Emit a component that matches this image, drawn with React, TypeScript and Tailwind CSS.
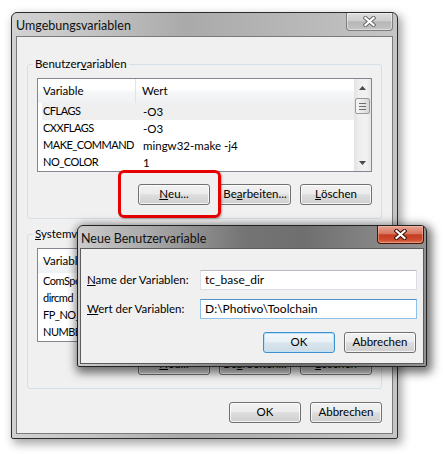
import type { ReactNode } from "react";
import clsx from "clsx";

const FONT = "font-[family-name:Lato,'Liberation_Sans',sans-serif]";

const userRows: [string, string][] = [
  ["CFLAGS", "-O3"],
  ["CXXFLAGS", "-O3"],
  ["MAKE_COMMAND", "mingw32-make -j4"],
  ["NO_COLOR", "1"],
];

const systemRows: [string, string][] = [
  ["ComSpec", "C:\\Windows\\system32\\cmd.exe"],
  ["dircmd", "/a"],
  ["FP_NO_HOST_CHECK", "NO"],
  ["NUMBER_OF_PROCESSORS", "4"],
];

function CloseGlyph({ outline }: { outline: string }) {
  return (
    <svg width="13" height="11" viewBox="0 0 13 11">
      <path d="M2.5 2 L10.5 9 M10.5 2 L2.5 9" stroke={outline} strokeWidth="4.2" strokeLinecap="square" />
      <path d="M2.5 2 L10.5 9 M10.5 2 L2.5 9" stroke="#ffffff" strokeWidth="2.2" strokeLinecap="square" />
    </svg>
  );
}

function CaptionClose({ active }: { active?: boolean }) {
  return (
    <div
      className={clsx(
        "flex h-[18px] w-[47px] items-center justify-center rounded-b-[4px] border border-t-0",
        active
          ? "border-[#4a1208] bg-[linear-gradient(#e6a594,#d8765f_45%,#c43d22_52%,#cc4a2e_80%,#de7650)] shadow-[inset_0_0_0_1px_rgba(255,200,180,0.45)]"
          : "border-[#7e7e7e] bg-[linear-gradient(#dedede,#cdcdcd_45%,#b7b7b7_52%,#c3c3c3)] shadow-[inset_0_0_0_1px_rgba(255,255,255,0.45)]"
      )}
    >
      <CloseGlyph outline={active ? "#3b0e06" : "#6a6a6a"} />
    </div>
  );
}

function WinButton({ children, primary = false }: { children: ReactNode; primary?: boolean }) {
  return (
    <div
      className={clsx(
        "flex h-[21px] w-[72px] shrink-0 items-center justify-center rounded-[3px] border pb-[1px] text-[11.5px] leading-none text-black",
        primary
          ? "border-[#3d90d0] bg-[linear-gradient(#f3f8fb,#e9f1f6_45%,#d9e5ee_52%,#cfdbe5)] shadow-[inset_0_0_0_1px_#bfe2f7]"
          : "border-[#707070] bg-[linear-gradient(#f2f2f2,#ebebeb_45%,#dddddd_52%,#cfcfcf)] shadow-[inset_0_0_0_1px_rgba(255,255,255,0.75)]"
      )}
    >
      {children}
    </div>
  );
}

function Arrow({ down }: { down?: boolean }) {
  return (
    <svg width="7" height="4" viewBox="0 0 7 4">
      <path d={down ? "M0 0 H7 L3.5 4 Z" : "M0 4 H7 L3.5 0 Z"} fill="#4a4a4a" />
    </svg>
  );
}

function Scrollbar() {
  return (
    <div className="flex w-[17px] shrink-0 flex-col bg-[linear-gradient(90deg,#e3e3e3,#eeeeee_30%,#f2f2f2_70%,#e6e6e6)]">
      <div className="flex h-[17px] items-center justify-center">
        <Arrow />
      </div>
      <div className="mx-[1px] mt-[2px] flex h-[16px] flex-col items-center justify-center gap-[2px] rounded-[2px] border border-[#9a9a9a] bg-[linear-gradient(90deg,#f4f4f4,#e9e9e9_50%,#d6d6d6)]">
        <span className="h-px w-[7px] bg-[#6d6d6d]" />
        <span className="h-px w-[7px] bg-[#6d6d6d]" />
        <span className="h-px w-[7px] bg-[#6d6d6d]" />
      </div>
      <div className="flex-1" />
      <div className="flex h-[17px] items-center justify-center">
        <Arrow down />
      </div>
    </div>
  );
}

function ListView({ rows, selected }: { rows: [string, string][]; selected?: number }) {
  return (
    <div className="flex h-[94px] border border-[#828790] bg-white">
      <div className="flex min-w-0 flex-1 flex-col">
        <div className="flex h-[24px] bg-[linear-gradient(#ffffff,#ffffff_45%,#f5f6f7_55%,#f0f1f2)] text-[11.5px]">
          <div className="flex w-[98px] items-center border-r border-[#e3e3e3] pl-[5px]">Variable</div>
          <div className="flex items-center pl-[6px]">Wert</div>
        </div>
        {rows.map(([name, value], i) => (
          <div
            key={name}
            className={clsx(
              "ml-[4px] flex h-[17px] items-center overflow-hidden whitespace-nowrap text-[11.5px]",
              i === selected && "bg-[#efefef]"
            )}
          >
            <div className="w-[94px] shrink-0 overflow-hidden pl-[1px] text-[11px] tracking-[-0.5px]">{name}</div>
            <div className="pl-[7px]">{value}</div>
          </div>
        ))}
      </div>
      <Scrollbar />
    </div>
  );
}

function GroupBox({ legend, rows, selected }: { legend: ReactNode; rows: [string, string][]; selected?: number }) {
  return (
    <fieldset className="rounded-[3px] border border-[#d5dfe5] px-0">
      <legend className="ml-[5px] px-[2px] text-[11.5px] leading-[14px]">{legend}</legend>
      <div className="px-[9px] pb-[13px] pt-[7px]">
        <ListView rows={rows} selected={selected} />
        <div className="mt-[12px] flex justify-end gap-[9px]">
          <WinButton>
            <u>N</u>eu...
          </WinButton>
          <WinButton>
            Be<u>a</u>rbeiten...
          </WinButton>
          <WinButton>
            <u>L</u>öschen
          </WinButton>
        </div>
      </div>
    </fieldset>
  );
}

function TextField({ value, focused }: { value: string; focused?: boolean }) {
  return (
    <div
      className={clsx(
        "flex h-[20px] items-center border bg-white pl-[4px] text-[12px]",
        focused ? "border-[#8cc1ec] border-t-[#4f94d2]" : "border-[#dbdfe6] border-t-[#b5b9c1]"
      )}
    >
      {value}
    </div>
  );
}

export default function App() {
  return (
    <div className={clsx("relative h-[454px] w-[443px] overflow-hidden bg-white text-black", FONT)}>
      {/* main window */}
      <div className="absolute left-[11px] top-[12px] flex h-[427px] w-[387px] flex-col rounded-t-[6px] rounded-b-[2px] border border-[#2c2c2c] bg-[linear-gradient(90deg,#d2d2d2_0%,#c4c4c4_20%,#aaaaaa_45%,#b3b3b3_65%,#c5c5c5_100%)] shadow-[3px_4px_10px_1px_rgba(0,0,0,0.35)]">
        <div className="flex h-[23px] items-start justify-between">
          <span className="pl-[4px] pt-[5px] text-[12.5px] leading-[15px] text-[#111]">Umgebungsvariablen</span>
          <div className="mr-[4px]">
            <CaptionClose />
          </div>
        </div>
        <div className="mx-[4px] mb-[4px] flex flex-1 flex-col border border-[#7b7b7b] bg-[#f0f0f0] px-[10px] pt-[20px]">
          <GroupBox
            legend={
              <>
                Benutzer<u>v</u>ariablen
              </>
            }
            rows={userRows}
            selected={0}
          />
          <div className="mt-[8px]">
            <GroupBox
              legend={
                <>
                  <u>S</u>ystemvariablen
                </>
              }
              rows={systemRows}
            />
          </div>
          <div className="mt-[13px] flex justify-end gap-[9px]">
            <WinButton>OK</WinButton>
            <WinButton>Abbrechen</WinButton>
          </div>
        </div>
      </div>

      {/* annotation */}
      <div className="absolute left-[118px] top-[170px] h-[48px] w-[103px] rounded-[6px] border-[3px] border-[#e60000] shadow-[1px_1px_2px_rgba(0,0,0,0.3)]" />

      {/* dialog */}
      <div className="absolute left-[77px] top-[225px] flex h-[142px] w-[350px] flex-col rounded-t-[6px] rounded-b-[2px] border border-[#222] bg-[linear-gradient(90deg,#cbcbcb_0%,#a6a6a6_22%,#747474_48%,#6f6f6f_65%,#8a8a8a_90%,#929292_100%)] shadow-[2px_3px_10px_3px_rgba(0,0,0,0.55)]">
        <div className="flex h-[22px] items-start justify-between">
          <span className="pl-[3px] pt-[5px] text-[12.5px] leading-[15px] text-[#111]">Neue Benutzervariable</span>
          <div className="mr-[2px]">
            <CaptionClose active />
          </div>
        </div>
        <div className="mx-[2px] mb-[2px] flex-1 border border-[#5c5c5c] bg-[#f0f0f0] px-[6px] pt-[21px]">
          <div className="grid grid-cols-[113px_1fr] items-center gap-y-[9px] text-[11.5px]">
            <span>
              <u>N</u>ame der Variablen:
            </span>
            <TextField value="tc_base_dir" />
            <span>
              <u>W</u>ert der Variablen:
            </span>
            <TextField value="D:\Photivo\Toolchain" focused />
          </div>
          <div className="mt-[13px] flex justify-end gap-[9px] pr-[1px]">
            <WinButton primary>OK</WinButton>
            <WinButton>Abbrechen</WinButton>
          </div>
        </div>
      </div>
    </div>
  );
}
